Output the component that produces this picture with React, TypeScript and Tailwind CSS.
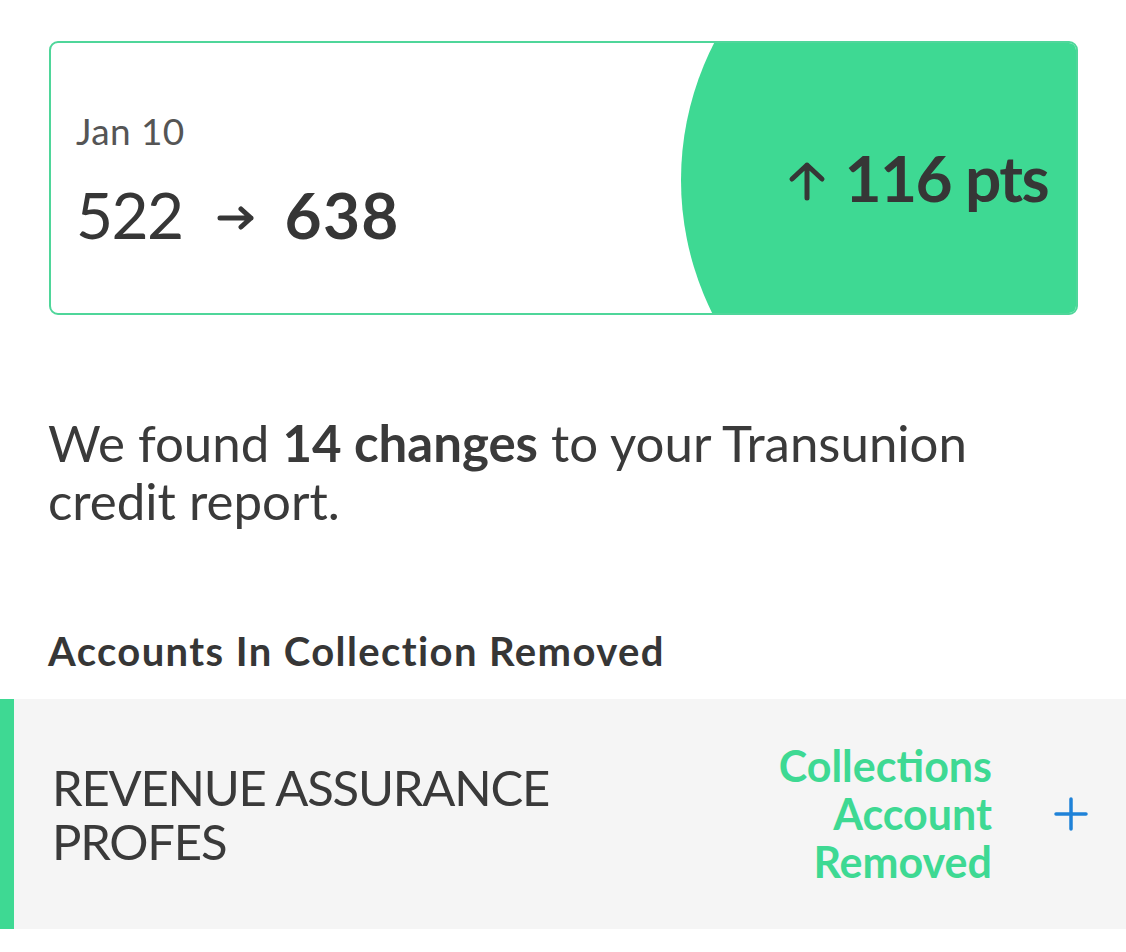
const App = () => {
  return (
    <div
      className="w-[1126px] h-[952px] bg-white overflow-hidden text-[#363636]"
      style={{ fontFamily: 'Lato, "Open Sans", sans-serif' }}
    >
      {/* score card */}
      <div className="pt-[41px] pl-[49px] pr-[48px]">
        <div className="relative h-[274px] rounded-[9px] border-2 border-[#4fd69a] overflow-hidden flex items-center justify-between">
          <div className="pl-[25px] pt-[2px]">
            <div className="text-[37px] leading-none tracking-[0.01em] text-[#555555]">Jan 10</div>
            <div className="mt-[34px] flex items-center text-[64px] leading-none">
              <span className="font-normal tracking-tight">522</span>
              <svg className="ml-[34px] mr-[30px] mt-[6px] w-[38px] h-[24px]" viewBox="0 0 38 24" fill="none" stroke="#363636" strokeWidth="5" strokeLinecap="round" strokeLinejoin="round">
                <path d="M3 12h31M24 3l10 9-10 9" />
              </svg>
              <span className="font-bold tracking-[0.02em]">638</span>
            </div>
          </div>

          {/* green curved panel */}
          <div className="absolute left-[630px] top-[-163px] w-[600px] h-[600px] rounded-full bg-[#3ed993]"></div>

          <div className="relative z-10 pr-[28px] flex items-center text-[64px] font-bold leading-none tracking-tight">
            <svg className="mr-[18px] mt-[6px] w-[38px] h-[40px]" viewBox="0 0 38 40" fill="none" stroke="#363636" strokeWidth="5" strokeLinecap="round" strokeLinejoin="round">
              <path d="M19 37V4M4 18L19 4l15 14" />
            </svg>
            <span>116 pts</span>
          </div>
        </div>
      </div>

      {/* summary */}
      <p className="mt-[99px] pl-[48px] w-[1020px] text-[51px] leading-[58px] text-[#3a3a3a]">
        We found <span className="font-bold">14 changes</span> to your Transunion credit report.
      </p>

      <h2 className="mt-[101px] pl-[48px] text-[40px] leading-none font-bold tracking-[0.035em] text-[#363636]">
        Accounts In Collection Removed
      </h2>

      {/* account row */}
      <div className="mt-[28px] h-[230px] bg-[#f5f5f5] flex border-l-[14px] border-[#3ed993]">
        <div className="flex-1 flex items-center pl-[38px]">
          <div className="text-[49px] leading-[54px] tracking-tight text-[#3a3a3a] font-normal">
            REVENUE ASSURANCE
            <br />
            PROFES
          </div>
        </div>
        <div className="flex items-center pr-[38px]">
          <div className="text-right text-[43px] leading-[48px] font-bold text-[#3ed993]">
            Collections
            <br />
            Account
            <br />
            Removed
          </div>
          <svg className="ml-[62px] w-[34px] h-[34px]" viewBox="0 0 34 34" fill="none" stroke="#1f82d8" strokeWidth="3.5" strokeLinecap="round">
            <path d="M17 2v30M2 17h30" />
          </svg>
        </div>
      </div>
    </div>
  );
};

export default App;
